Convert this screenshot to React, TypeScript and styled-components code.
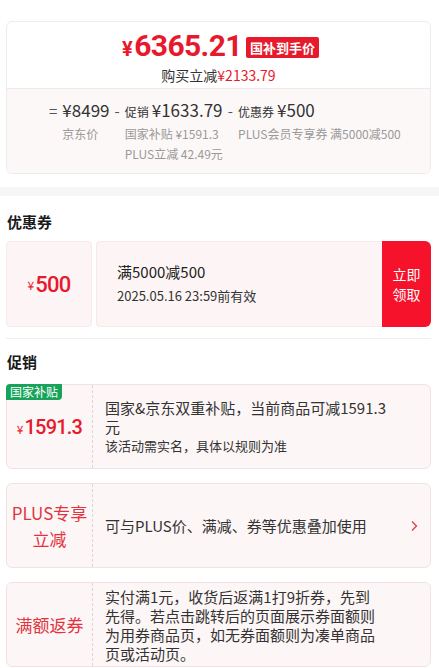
import styled, { createGlobalStyle } from 'styled-components';

const GlobalStyle = createGlobalStyle`
  * { box-sizing: border-box; }
  html, body {
    margin: 0;
    padding: 0;
    background: #fff;
    font-family: "Noto Sans CJK SC", "Noto Sans", sans-serif;
    color: #333;
  }
`;

const RED = '#e8192c';
const PROMO_RED = '#e2343f';

const Page = styled.div`
  width: 439px;
  height: 668px;
  overflow: hidden;
  background: #fff;
`;

const TopSection = styled.div`
  padding: 21px 8px 13px 6px;
`;

const PriceCard = styled.div`
  border: 1px solid #ececee;
  border-radius: 6px;
  overflow: hidden;
`;

const PriceHead = styled.div`
  height: 67px;
  display: flex;
  flex-direction: column;
  align-items: center;
  padding-top: 9px;
  border-bottom: 1px solid #f3e8ea;
`;

const PriceLine = styled.div`
  display: flex;
  align-items: center;
  height: 32px;
  padding-left: 4px;
`;

const BigPrice = styled.span`
  font-family: Roboto, "Noto Sans", sans-serif;
  font-weight: 700;
  font-size: 30px;
  color: ${RED};
  line-height: 32px;
  letter-spacing: -0.6px;
`;

const BigYen = styled.span`
  font-size: 20px;
  margin-right: 2px;
`;

const Tag = styled.span<{ $bg: string }>`
  background: ${(p) => p.$bg};
  color: #fff;
  font-weight: 700;
  font-size: 13px;
  line-height: 21px;
  padding: 0 4px;
  margin-left: 4px;
  border-radius: 2px;
`;

const SaveLine = styled.div`
  font-size: 14px;
  line-height: 20px;
  margin-top: 2px;
  color: #333;
`;

const RedText = styled.span`
  color: ${RED};
`;

const Breakdown = styled.div`
  background: #fdf8f8;
  padding: 9px 0 9px 42px;
  display: grid;
  grid-template-columns: auto auto auto auto auto auto;
  justify-content: start;
  column-gap: 5px;
  align-items: baseline;
`;

const Op = styled.span`
  color: #555;
  font-size: 15px;
  line-height: 24px;
`;

const Amount = styled.span`
  font-size: 17px;
  line-height: 24px;
  color: #333;
  white-space: nowrap;
`;

const SmallLabel = styled.span`
  font-size: 12px;
  margin-right: 3px;
`;

const SubLabel = styled.div`
  font-size: 12px;
  line-height: 20px;
  color: #999;
  white-space: nowrap;
`;

const Band = styled.div`
  height: 9px;
  background: #f6f6f8;
`;

const Section = styled.div`
  padding: 15px 8px 0 6px;
`;

const Title = styled.div`
  font-size: 15px;
  font-weight: 700;
  line-height: 22px;
  color: #1a1a1a;
  padding-left: 1px;
`;

const Coupon = styled.div`
  margin-top: 8px;
  display: flex;
  height: 86px;
`;

const CouponValue = styled.div`
  width: 86px;
  background: #fdf5f5;
  border: 1px solid #f6eaea;
  border-radius: 4px;
  display: flex;
  align-items: center;
  justify-content: center;
  color: ${RED};
`;

const ValueSmall = styled.span`
  font-size: 12px;
  margin-right: 1px;
`;

const ValueBig = styled.span<{ $size: number }>`
  font-family: Roboto, "Noto Sans", sans-serif;
  font-size: ${(p) => p.$size}px;
  font-weight: 500;
  letter-spacing: -0.8px;
`;

const CouponBody = styled.div`
  flex: 1;
  margin-left: 4px;
  background: #fdf5f5;
  border: 1px solid #f6eaea;
  border-right: none;
  border-radius: 4px 0 0 4px;
  display: flex;
  flex-direction: column;
  justify-content: center;
  padding-left: 20px;
`;

const CouponRule = styled.div`
  font-size: 15px;
  line-height: 24px;
  color: #222;
`;

const CouponDate = styled.div`
  font-size: 13px;
  line-height: 24px;
  color: #333;
`;

const ClaimButton = styled.div`
  width: 49px;
  background: #f5122a;
  border-radius: 0 6px 6px 0;
  color: #fff;
  font-size: 14px;
  line-height: 20px;
  display: flex;
  align-items: center;
  justify-content: center;
  text-align: center;
`;

const Divider = styled.div`
  height: 1px;
  background: #efefef;
  margin: 11px 0 12px;
`;

const PromoList = styled.div`
  margin-top: 11px;
  display: flex;
  flex-direction: column;
  gap: 14px;
`;

const PromoCard = styled.div`
  position: relative;
  display: flex;
  height: 85px;
  background: #fdf6f6;
  border: 1px solid #f2e2e4;
  border-radius: 6px;
`;

const PromoSide = styled.div`
  width: 86px;
  flex-shrink: 0;
  border-right: 1px dashed #e3d3d6;
  display: flex;
  align-items: center;
  justify-content: center;
  text-align: center;
  color: ${PROMO_RED};
  font-size: 17px;
  line-height: 26px;
`;

const SideAmount = styled.div`
  color: ${RED};
  margin-top: 3px;
`;

const GreenTag = styled.span`
  position: absolute;
  left: -1px;
  top: -1px;
  background: #17a35a;
  color: #fff;
  font-size: 12px;
  line-height: 16px;
  padding: 0 4px;
  border-radius: 4px 0 4px 0;
`;

const PromoBody = styled.div`
  flex: 1;
  display: flex;
  align-items: center;
  padding: 0 10px 0 12px;
`;

const PromoText = styled.div<{ $pr: number }>`
  flex: 1;
  padding-right: ${(p) => p.$pr}px;
  font-size: 15px;
  line-height: 19px;
  color: #333;
`;

const PromoNote = styled.div`
  font-size: 13px;
  line-height: 18px;
  margin-top: 1px;
`;

const Chevron = styled.svg`
  width: 10px;
  height: 14px;
  flex-shrink: 0;
  margin-right: 1px;
`;

export default function App() {
  return (
    <Page>
      <GlobalStyle />
      <TopSection>
        <PriceCard>
          <PriceHead>
            <PriceLine>
              <BigPrice>
                <BigYen>¥</BigYen>6365.21
              </BigPrice>
              <Tag $bg="#e61a2b">国补到手价</Tag>
            </PriceLine>
            <SaveLine>
              购买立减<RedText>¥2133.79</RedText>
            </SaveLine>
          </PriceHead>
          <Breakdown>
            <Op>=</Op>
            <Amount>¥8499</Amount>
            <Op>-</Op>
            <Amount>
              <SmallLabel>促销</SmallLabel>¥1633.79
            </Amount>
            <Op>-</Op>
            <Amount>
              <SmallLabel>优惠券</SmallLabel>¥500
            </Amount>
            <span />
            <SubLabel>京东价</SubLabel>
            <span />
            <div>
              <SubLabel>国家补贴 ¥1591.3</SubLabel>
              <SubLabel>PLUS立减 42.49元</SubLabel>
            </div>
            <span />
            <SubLabel>PLUS会员专享券 满5000减500</SubLabel>
          </Breakdown>
        </PriceCard>
      </TopSection>
      <Band />
      <Section>
        <Title>优惠券</Title>
        <Coupon>
          <CouponValue>
            <ValueSmall>¥</ValueSmall>
            <ValueBig $size={22}>500</ValueBig>
          </CouponValue>
          <CouponBody>
            <CouponRule>满5000减500</CouponRule>
            <CouponDate>2025.05.16 23:59前有效</CouponDate>
          </CouponBody>
          <ClaimButton>
            立即
            <br />
            领取
          </ClaimButton>
        </Coupon>
        <Divider />
        <Title>促销</Title>
        <PromoList>
          <PromoCard>
            <GreenTag>国家补贴</GreenTag>
            <PromoSide>
              <SideAmount>
                <ValueSmall>¥</ValueSmall>
                <ValueBig $size={20}>1591.3</ValueBig>
              </SideAmount>
            </PromoSide>
            <PromoBody>
              <PromoText $pr={26}>
                国家&amp;京东双重补贴，当前商品可减1591.3元
                <PromoNote>该活动需实名，具体以规则为准</PromoNote>
              </PromoText>
            </PromoBody>
          </PromoCard>
          <PromoCard>
            <PromoSide>
              PLUS专享
              <br />
              立减
            </PromoSide>
            <PromoBody>
              <PromoText $pr={10}>可与PLUS价、满减、券等优惠叠加使用</PromoText>
              <Chevron viewBox="0 0 10 14">
                <path d="M3 2.5 L7.5 7 L3 11.5" fill="none" stroke="#d4414c" strokeWidth="1.3" />
              </Chevron>
            </PromoBody>
          </PromoCard>
          <PromoCard>
            <PromoSide>满额返券</PromoSide>
            <PromoBody>
              <PromoText $pr={40}>
                实付满1元，收货后返满1打9折券，先到先得。若点击跳转后的页面展示券面额则为用券商品页，如无券面额则为凑单商品页或活动页。
              </PromoText>
            </PromoBody>
          </PromoCard>
        </PromoList>
      </Section>
    </Page>
  );
}
